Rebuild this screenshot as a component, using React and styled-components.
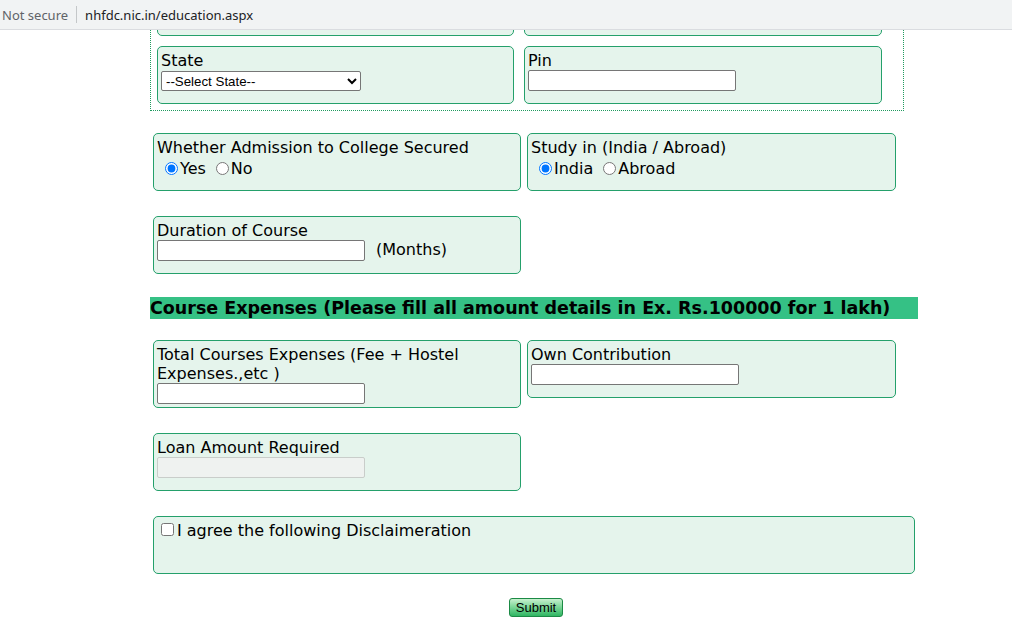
import React from 'react';
import styled, {createGlobalStyle} from 'styled-components';

const GlobalStyle = createGlobalStyle`
    html, body {
        margin: 0;
        padding: 0;
        background: #ffffff;
        overflow: hidden;
    }
    body {
        font-family: "DejaVu Sans", Verdana, sans-serif;
        color: #000;
    }
`;

const AddressBar = styled.div`
    height: 29px;
    background: #f1f3f4;
    border-bottom: 1px solid #dadce0;
    display: flex;
    align-items: center;
    padding-left: 2px;
    font-family: "Noto Sans", "Open Sans", sans-serif;
    font-size: 13px;
    .insecure {
        color: #5f6368;
    }
    .sep {
        width: 1px;
        height: 17px;
        background: #c4c7c9;
        margin: 0 8px 0 8px;
    }
    .url {
        color: #202124;
    }
`;

const ScrollArea = styled.div`
    height: 596px;
    overflow: hidden;
`;

const Page = styled.div`
    width: 768px;
    margin-left: 150px;
`;

const DottedSet = styled.div`
    margin-top: -59px;
    width: 746px;
    border: 1px dotted #1f9a5e;
    padding: 6px 0 6px 6px;
    display: flex;
    flex-direction: column;
    gap: 10px;
`;

const Row = styled.div`
    display: flex;
    gap: ${p => p.$gap || 6}px;
    margin-top: ${p => p.$top || 0}px;
    padding-left: ${p => p.$indent || 0}px;
    align-items: flex-start;
`;

const Box = styled.div`
    box-sizing: border-box;
    width: ${p => p.$w}px;
    min-height: 58px;
    background: #e5f4ec;
    border: 1px solid #24a06b;
    border-radius: 5px;
    padding: 4px 3px 3px;
    font-size: 16px;
    line-height: 19px;
`;

const Label = styled.div`
    display: block;
`;

const TextInput = styled.input`
    box-sizing: border-box;
    display: block;
    width: 208px;
    height: 21px;
    margin: 0;
    border: 1px solid #767676;
    border-radius: 2px;
    background: ${p => (p.disabled ? '#eff2f0' : '#fff')};
    border-color: ${p => (p.disabled ? '#c9cdca' : '#767676')};
    padding: 1px 2px;
    font-size: 13px;
`;

const InlineField = styled.div`
    display: flex;
    align-items: center;
    input {
        margin: 0;
    }
    span {
        margin-left: 11px;
        margin-top: -2px;
    }
`;

const Select = styled.select`
    display: block;
    box-sizing: border-box;
    width: 200px;
    height: 20px;
    margin: 1px 0 0;
    font-family: "Liberation Sans", Arial, sans-serif;
    font-size: 13.3px;
    color: #000;
    background: #fff;
    border: 1px solid #767676;
    border-radius: 2px;
    padding: 0;
`;

const RadioList = styled.div`
    display: flex;
    align-items: center;
    padding-left: 3px;
    margin-top: 2px;
    label {
        display: flex;
        align-items: center;
        margin-right: 5px;
    }
    input {
        width: 13px;
        height: 13px;
        margin: 0 2px 0 5px;
    }
`;

const SectionHeading = styled.div`
    margin-top: 23px;
    background: #35c185;
    height: 22px;
    line-height: 22px;
    font-size: 17.5px;
    font-weight: bold;
    white-space: nowrap;
`;

const CheckLine = styled.label`
    display: flex;
    align-items: center;
    input {
        width: 13px;
        height: 13px;
        margin: 1px 3px 3px 4px;
    }
`;

const SubmitBar = styled.div`
    display: flex;
    justify-content: center;
    margin-top: 24px;
    padding-left: 4px;
`;

const SubmitButton = styled.button`
    width: 54px;
    height: 19px;
    padding: 0;
    font-family: "Liberation Sans", Arial, sans-serif;
    font-size: 13px;
    color: #000;
    border: 1px solid #1c8a45;
    border-radius: 3px;
    background: linear-gradient(to bottom, #c8f0cf 0%, #7fd89a 45%, #2fb562 100%);
`;

const Radios = ({name, options, value}) => (
    <RadioList>
        {options.map(o => (
            <label key={o}>
                <input type="radio" name={name} defaultChecked={o === value}/>
                {o}
            </label>
        ))}
    </RadioList>
);

const App = () => {
    return (
        <>
            <GlobalStyle/>
            <AddressBar>
                <span className="insecure">Not secure</span>
                <span className="sep"/>
                <span className="url">nhfdc.nic.in/education.aspx</span>
            </AddressBar>
            <ScrollArea>
                <Page>
                    <DottedSet>
                        <Row $gap={10}>
                            <Box $w={357}>
                                <Label>District</Label>
                                <TextInput type="text"/>
                            </Box>
                            <Box $w={358}>
                                <Label>City</Label>
                                <TextInput type="text"/>
                            </Box>
                        </Row>
                        <Row $gap={10}>
                            <Box $w={357}>
                                <Label>State</Label>
                                <Select defaultValue="">
                                    <option value="">--Select State--</option>
                                </Select>
                            </Box>
                            <Box $w={358}>
                                <Label>Pin</Label>
                                <TextInput type="text"/>
                            </Box>
                        </Row>
                    </DottedSet>

                    <Row $top={22} $indent={3}>
                        <Box $w={368}>
                            <Label>Whether Admission to College Secured</Label>
                            <Radios name="admission" options={['Yes', 'No']} value="Yes"/>
                        </Box>
                        <Box $w={369}>
                            <Label>Study in (India / Abroad)</Label>
                            <Radios name="study" options={['India', 'Abroad']} value="India"/>
                        </Box>
                    </Row>

                    <Row $top={25} $indent={3}>
                        <Box $w={368}>
                            <Label>Duration of Course</Label>
                            <InlineField>
                                <TextInput type="text"/>
                                <span>(Months)</span>
                            </InlineField>
                        </Box>
                    </Row>

                    <SectionHeading>
                        Course Expenses (Please fill all amount details in Ex. Rs.100000 for 1 lakh)
                    </SectionHeading>

                    <Row $top={21} $indent={3}>
                        <Box $w={368}>
                            <Label>Total Courses Expenses (Fee + Hostel Expenses.,etc )</Label>
                            <TextInput type="text"/>
                        </Box>
                        <Box $w={369}>
                            <Label>Own Contribution</Label>
                            <TextInput type="text"/>
                        </Box>
                    </Row>

                    <Row $top={25} $indent={3}>
                        <Box $w={368}>
                            <Label>Loan Amount Required</Label>
                            <TextInput type="text" disabled/>
                        </Box>
                    </Row>

                    <Row $top={25} $indent={3}>
                        <Box $w={762}>
                            <CheckLine>
                                <input type="checkbox"/>
                                I agree the following Disclaimeration
                            </CheckLine>
                        </Box>
                    </Row>

                    <SubmitBar>
                        <SubmitButton type="button">Submit</SubmitButton>
                    </SubmitBar>
                </Page>
            </ScrollArea>
        </>
    );
};

export default App;
